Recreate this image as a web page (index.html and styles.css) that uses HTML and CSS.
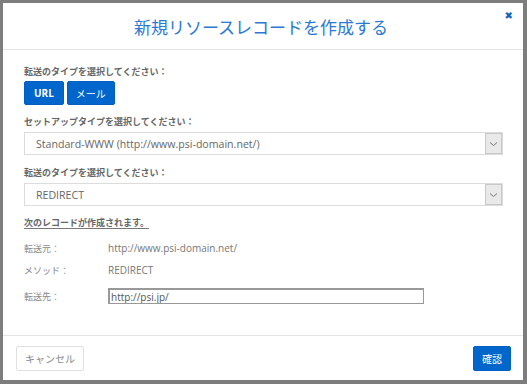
FILE: index.html
```html
<!DOCTYPE html>
<html lang="ja">
<head>
  <meta charset="UTF-8">
  <title>新規リソースレコードを作成する</title>
  <link rel="stylesheet" href="styles.css">
</head>
<body>
  <div class="modal">
    <div class="modal-header">
      <h1>新規リソースレコードを作成する</h1>
      <span class="close">&#x2716;</span>
    </div>
    <div class="modal-body">
      <div class="label">転送のタイプを選択してください：</div>
      <div class="btn-group">
        <button class="btn btn-primary">URL</button>
        <button class="btn btn-primary light">メール</button>
      </div>
      <div class="label">セットアップタイプを選択してください：</div>
      <div class="select">
        <span>Standard-WWW (http://www.psi-domain.net/)</span>
        <span class="arrow"><svg width="9" height="6" viewBox="0 0 9 6"><path d="M1 1.5 L4.5 4.5 L8 1.5" fill="none" stroke="#777" stroke-width="1"/></svg></span>
      </div>
      <div class="label">転送のタイプを選択してください：</div>
      <div class="select">
        <span>REDIRECT</span>
        <span class="arrow"><svg width="9" height="6" viewBox="0 0 9 6"><path d="M1 1.5 L4.5 4.5 L8 1.5" fill="none" stroke="#777" stroke-width="1"/></svg></span>
      </div>
      <div class="label summary">次のレコードが作成されます。</div>
      <div class="row">
        <span class="key">転送元：</span>
        <span class="val">http://www.psi-domain.net/</span>
      </div>
      <div class="row">
        <span class="key">メソッド：</span>
        <span class="val">REDIRECT</span>
      </div>
      <div class="row last">
        <span class="key">転送先：</span>
        <input class="dest" type="text" value="http://psi.jp/">
      </div>
    </div>
    <div class="modal-footer">
      <button class="btn btn-default">キャンセル</button>
      <button class="btn btn-primary">確認</button>
    </div>
  </div>
</body>
</html>
```
FILE: styles.css
```css
* {
  box-sizing: border-box;
}
html, body {
  margin: 0;
  padding: 0;
}
body {
  background: #7d7d7d;
  font-family: 'Open Sans', 'Noto Sans CJK JP', sans-serif;
  width: 527px;
  height: 384px;
  overflow: hidden;
}
.modal {
  background: #fff;
  margin: 3px 0 0 3px;
  width: 520px;
  height: 377px;
  display: flex;
  flex-direction: column;
  position: relative;
}
.modal-header {
  height: 47px;
  border-bottom: 1px solid #e3e3e3;
  display: flex;
  align-items: center;
  justify-content: center;
}
.modal-header h1 {
  margin: 0;
  font-size: 17px;
  font-weight: 400;
  color: #2a78d4;
  font-family: 'Noto Sans CJK JP', sans-serif;
  line-height: 1;
  padding-right: 4px;
}
.close {
  position: absolute;
  top: 7px;
  right: 10px;
  color: #1565c0;
  font-size: 10px;
  font-weight: 700;
  font-family: 'DejaVu Sans', sans-serif;
}
.modal-body {
  flex: 1;
  padding: 16px 20px 0 21px;
  display: flex;
  flex-direction: column;
}
.label {
  font-size: 9px;
  line-height: 12px;
  font-weight: 700;
  color: #666;
  margin-bottom: 4px;
}
.btn-group {
  display: flex;
  gap: 3px;
  margin-top: -1px;
  margin-bottom: 11px;
}
.btn {
  font-family: 'Open Sans', 'Noto Sans CJK JP', sans-serif;
  font-size: 10px;
  height: 24px;
  border-radius: 2px;
  padding: 0 8px;
  cursor: pointer;
}
.btn-primary {
  background: #0066cc;
  border: 1px solid #0060c0;
  color: #fff;
  font-weight: 700;
  padding: 0 9px;
}
.btn-primary.light {
  font-weight: 400;
  padding: 0 8px;
}
.select {
  height: 23px;
  border: 1px solid #dcdcdc;
  display: flex;
  align-items: center;
  justify-content: space-between;
  font-size: 10.6px;
  color: #666;
  margin-bottom: 12px;
}
.select span:first-child {
  padding-left: 11px;
}
.arrow {
  width: 17px;
  height: 21px;
  background: #e9e9e9;
  border: 1px solid #c8c8c8;
  display: flex;
  align-items: center;
  justify-content: center;
}
.summary {
  align-self: flex-start;
  border-bottom: 1px solid #777;
  line-height: 11px;
  margin-top: -1px;
  margin-bottom: 11px;
}
.row {
  display: flex;
  align-items: center;
  height: 16px;
  margin-bottom: 6px;
  font-size: 10px;
  color: #777;
}
.row.last {
  margin-top: 4px;
}
.key {
  width: 84px;
  font-size: 9px;
  color: #888;
}
.val {
  color: #777;
}
.dest {
  width: 316px;
  height: 16px;
  border: 2px solid #999;
  border-width: 2px 1px 1px 2px;
  padding: 0 1px;
  font-family: 'Open Sans', sans-serif;
  font-size: 10px;
  color: #555;
  margin: 0;
}
.modal-footer {
  height: 45px;
  border-top: 1px solid #e3e3e3;
  display: flex;
  align-items: flex-start;
  justify-content: space-between;
  padding: 10px 12px 0 13px;
}
.btn-default {
  background: #fff;
  border: 1px solid #e0e0e0;
  color: #888;
  font-weight: 400;
  padding: 0 8px;
  height: 25px;
}
.modal-footer .btn-primary {
  height: 25px;
  font-weight: 400;
  padding: 0 8px;
}
```
